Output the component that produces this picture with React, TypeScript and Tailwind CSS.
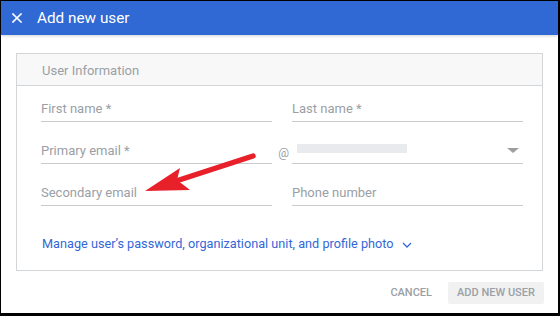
import React from 'react'

const font = { fontFamily: 'Roboto, "Liberation Sans", sans-serif' }

function Field({ label, children }: { label?: string; children?: React.ReactNode }) {
	return (
		<div className="flex h-[28px] w-full items-center border-b border-[#c9cbce] pt-[2px]">
			{label && <span className="text-[13px] text-[#9aa0a6]">{label}</span>}
			{children}
		</div>
	)
}

export default function App() {
	return (
		<div
			style={font}
			className="relative h-[316px] w-[560px] overflow-hidden border-t border-l border-r-2 border-b-[3px] border-black bg-white"
		>
			{/* header bar */}
			<div className="flex h-[34px] items-center bg-[#3068d4] shadow-[0_1px_3px_rgba(0,0,0,0.18)]">
				<svg className="ml-[11px]" width="10" height="10" viewBox="0 0 10 10">
					<path d="M1 1L9 9M9 1L1 9" stroke="white" strokeWidth="1.6" strokeLinecap="square" />
				</svg>
				<span className="ml-[15px] text-[15.3px] text-white">Add new user</span>
			</div>

			{/* card */}
			<div className="ml-[15px] mt-[18px] w-[527px] border border-[#d3d6d9]">
				<div className="flex h-[32px] items-center border-b border-[#d3d6d9] bg-[#f8f8f8] pl-[25px] pt-[2px]">
					<span className="text-[13px] text-[#9aa0a6]">User Information</span>
				</div>

				<div className="flex flex-col gap-[14px] pl-[24px] pr-[19px] pt-[8px]">
					<div className="flex">
						<div className="w-[231px]"><Field label="First name *" /></div>
						<div className="w-[20px]" />
						<div className="flex-1"><Field label="Last name *" /></div>
					</div>
					<div className="flex">
						<div className="w-[231px]"><Field label="Primary email *" /></div>
						<div className="flex w-[20px] items-center justify-end pt-[5px] pr-[3px] text-[12px] text-[#9aa0a6]">@</div>
						<div className="flex-1">
							<Field>
								<div className="ml-[5px] mb-[4px] h-[9px] w-[110px] bg-[#e8eaed]" />
								<div className="ml-auto mr-[4px] h-0 w-0 border-x-[6px] border-t-[5px] border-x-transparent border-t-[#9e9e9e]" />
							</Field>
						</div>
					</div>
					<div className="flex">
						<div className="w-[231px]"><Field label="Secondary email" /></div>
						<div className="w-[20px]" />
						<div className="flex-1"><Field label="Phone number" /></div>
					</div>
				</div>

				<div className="flex items-center pl-[25px] pt-[30px] pb-[18px] text-[12.7px] leading-[16px] text-[#3367d6]">
					<span>Manage user’s password, organizational unit, and profile photo</span>
					<svg className="ml-[8px] mt-[2px]" width="10" height="6" viewBox="0 0 10 6">
						<path d="M1 1L5 5L9 1" fill="none" stroke="#3367d6" strokeWidth="1.3" />
					</svg>
				</div>
			</div>

			{/* actions */}
			<div className="mt-[11px] flex w-[543px] items-center justify-end">
				<span className="mr-[16px] text-[11px] font-medium text-[#9aa0a6]">CANCEL</span>
				<div className="flex h-[22px] w-[96px] items-center justify-center rounded-[2px] bg-[#f1f1f1] text-[11px] font-medium text-[#9aa0a6]">
					ADD NEW USER
				</div>
			</div>

			{/* red annotation arrow */}
			<svg className="pointer-events-none absolute inset-0" width="557" height="312" viewBox="0 0 557 312">
				<path d="M252 155L172 181" stroke="#e8202a" strokeWidth="5.5" strokeLinecap="round" />
				<path d="M144 190L179 167L176 179L189 189Z" fill="#e8202a" />
			</svg>
		</div>
	)
}
